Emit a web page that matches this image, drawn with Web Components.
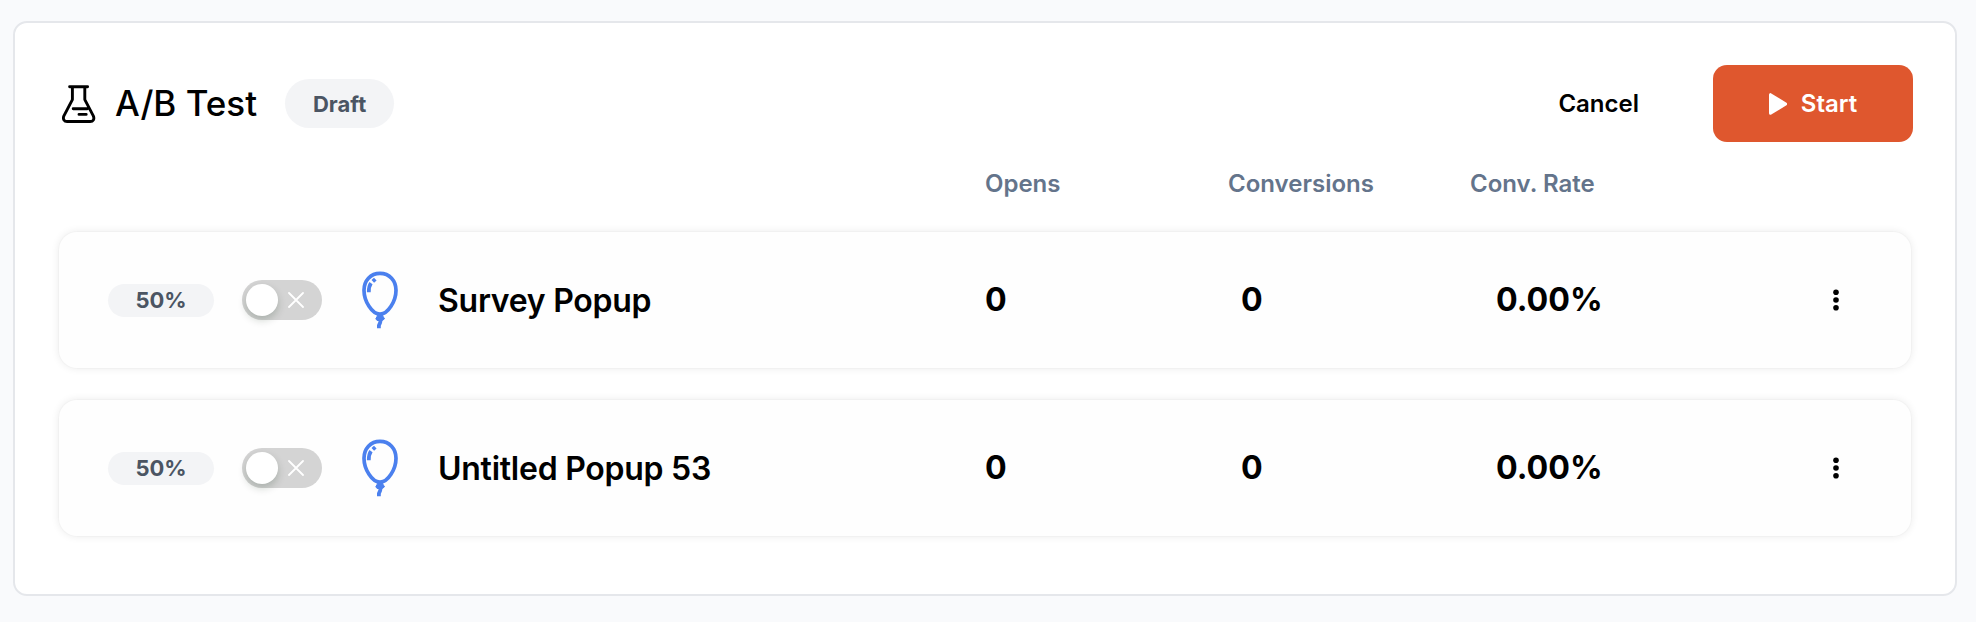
<!DOCTYPE html>
<html lang="en">
<head>
<meta charset="utf-8">
<title>A/B Test</title>
<style>
  body {
    margin: 0; padding: 21px 19px 26px 13px;
    width: 1976px; height: 622px; box-sizing: border-box; overflow: hidden;
    background: #f9fafc; color: #000;
    font-family: Inter, 'Liberation Sans', sans-serif;
    -webkit-font-smoothing: antialiased;
  }
</style>
</head>
<body>
<ab-test-panel heading="A/B Test">
  <ab-pill slot="status">Draft</ab-pill>
  <ab-button slot="actions" variant="ghost">Cancel</ab-button>
  <ab-button slot="actions" variant="primary" icon="play">Start</ab-button>
  <ab-variant share="50%" opens="0" conversions="0" rate="0.00%">Survey Popup</ab-variant>
  <ab-variant share="50%" opens="0" conversions="0" rate="0.00%">Untitled Popup 53</ab-variant>
</ab-test-panel>

<script>
const ICONS = {
  flask: `<svg width="34" height="40" viewBox="0 0 34 40" fill="none" stroke="#000" stroke-width="2.9" stroke-linecap="round" stroke-linejoin="round">
    <path d="M7.6 2.7H25.6M10.4 2.7V15.6L1.9 31.8C.5 35.2 2.3 37.5 5.1 37.5H28.2C31 37.5 32.8 35.2 31.3 31.8L22.8 15.6V2.7M11.2 24.8H25.3M17 30.4H24.2"/></svg>`,
  play: `<svg width="18" height="22" viewBox="0 0 18 22" fill="#fff" stroke="#fff" stroke-width="3" stroke-linejoin="round">
    <path d="M1.5 1.7V20.2L16.7 11Z"/></svg>`,
  balloon: `<svg width="36" height="58" viewBox="0 0 36 58" fill="none" stroke="#4b80ee" stroke-width="3.7" stroke-linejoin="round">
    <path d="M18 2.3C8.5 2.3 2 9.6 2 19.2C2 30.2 10 43.2 18 43.2S34 30.2 34 19.2C34 9.6 27.5 2.3 18 2.3Z"/>
    <path d="M6.8 21.2C6.7 17.2 7.5 14.3 9 12.2M10.8 10.4L13.3 8.1" stroke-width="3.8"/>
    <path d="M16.2 43.5H19.8L22.5 47.8L20.4 49.5H15.1L13.8 47.8Z" fill="#4b80ee" stroke-width="1"/>
    <path d="M18.6 49L18.2 51.5L16.9 54.5V57.2" stroke-width="3.8"/></svg>`,
  cross: `<svg width="16" height="16" viewBox="0 0 16 16" fill="none" stroke="#fff" stroke-width="1.8" stroke-linecap="round">
    <path d="M1 1L15 15M15 1L1 15"/></svg>`,
  dots: `<svg width="6" height="22" viewBox="0 0 6 22" fill="#000">
    <circle cx="3" cy="3.3" r="2.8"/><circle cx="3" cy="11" r="2.8"/><circle cx="3" cy="18.7" r="2.8"/></svg>`,
};

class AbElement extends HTMLElement {
  connectedCallback() {
    if (!this.shadowRoot) this.attachShadow({ mode: 'open' });
    this.shadowRoot.innerHTML = this.render();
  }
  attr(name) { return this.getAttribute(name) ?? ''; }
}

class AbPill extends AbElement {
  render() {
    return `<style>
:host {
  display: flex; align-items: center; justify-content: center; box-sizing: border-box;
  width: 109px; height: 49px; border-radius: 25px;
  background: #f3f4f6; color: #4b5563; font-size: 22px; font-weight: 650; line-height: 1;
}
:host([size="sm"]) { width: 106px; height: 33px; border-radius: 17px; }
</style><slot></slot>`;
  }
}
customElements.define('ab-pill', AbPill);

class AbButton extends AbElement {
  render() {
    return `<style>
:host { display: block; }
button {
  display: flex; align-items: center; justify-content: center; gap: 14px;
  height: 77px; padding: 0 56px; border: 0; border-radius: 14px;
  background: none; color: #000; font: 600 24px/1 Inter, sans-serif; cursor: pointer;
}
:host([variant="ghost"]) button { padding: 0 74px 0 0; }
:host([variant="primary"]) button { width: 200px; padding: 0; background: #df572e; color: #fff; }
svg { display: block; }
</style>
<button type="button">${ICONS[this.attr('icon')] ?? ''}<slot></slot></button>`;
  }
}
customElements.define('ab-button', AbButton);

class AbToggle extends AbElement {
  render() {
    return `<style>
:host {
  display: flex; align-items: center; justify-content: space-between; box-sizing: border-box;
  width: 80px; height: 40px; padding: 0 18px 0 4px; border-radius: 20px; background: #d4d4d4;
}
.knob { width: 32px; height: 32px; border-radius: 50%; background: #fff; box-shadow: 0 4px 8px rgba(0,35,11,.2); }
svg { display: block; }
</style>
<span class="knob"></span>${ICONS.cross}`;
  }
}
customElements.define('ab-toggle', AbToggle);

class AbVariant extends AbElement {
  render() {
    return `<style>
:host {
  display: grid; grid-template-columns: 134px 120px 76px 547px 256px 255px 1fr auto;
  align-items: center; box-sizing: border-box; height: 136px; padding: 0 72px 0 49px;
  border-radius: 18px; background: #fefefe;
  box-shadow: 0 0 0 1px rgba(0,0,0,.015), 0 0 9px rgba(0,0,0,.09);
}
.name { font-size: 32px; font-weight: 600; line-height: 40px; letter-spacing: -.26px; padding-top: 2px; }
.num { font-size: 32.2px; font-weight: 700; line-height: 40px; padding-bottom: 1px; }
svg { display: block; }
</style>
<ab-pill size="sm">${this.attr('share')}</ab-pill>
<ab-toggle></ab-toggle>
${ICONS.balloon}
<div class="name"><slot></slot></div>
<div class="num">${this.attr('opens')}</div>
<div class="num">${this.attr('conversions')}</div>
<div class="num">${this.attr('rate')}</div>
${ICONS.dots}`;
  }
}
customElements.define('ab-variant', AbVariant);

class AbTestPanel extends AbElement {
  render() {
    return `<style>
:host {
  display: block; box-sizing: border-box; height: 575px; padding: 42px 44px 0;
  border: 2px solid #e5e7eb; border-radius: 14px; background: #fff;
}
header { display: flex; align-items: center; height: 77px; padding-left: 3px; margin-right: -2px; }
h2 { margin: 0 28px 2px 19px; font-size: 35px; font-weight: 500; line-height: 44px; }
.actions { display: flex; margin-left: auto; }
.cols {
  display: grid; grid-template-columns: 243px 242px 1fr; padding-left: 926px; height: 90px;
  color: #64748b; font-size: 24px; font-weight: 600; line-height: 83px;
}
.rows { display: grid; gap: 32px; }
svg { display: block; }
</style>
<header>
  ${ICONS.flask}
  <h2>${this.attr('heading')}</h2>
  <slot name="status"></slot>
  <div class="actions"><slot name="actions"></slot></div>
</header>
<div class="cols"><span>Opens</span><span>Conversions</span><span>Conv. Rate</span></div>
<div class="rows"><slot></slot></div>`;
  }
}
customElements.define('ab-test-panel', AbTestPanel);
</script>
</body>
</html>
